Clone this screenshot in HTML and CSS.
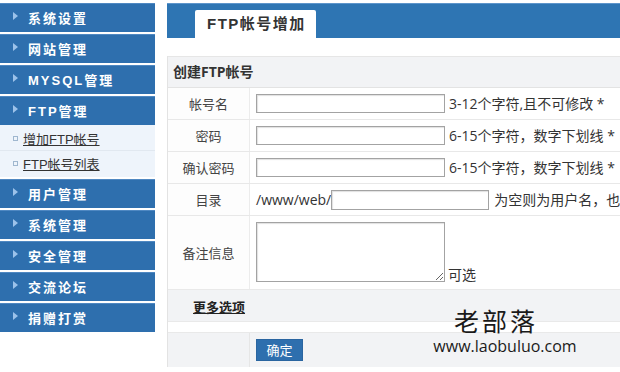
FILE: index.html
```html
<!DOCTYPE html>
<html lang="zh-CN">
<head>
<meta charset="utf-8">
<title>FTP帐号增加</title>
<link rel="stylesheet" href="styles.css">
</head>
<body>
<div class="page">
  <aside class="sidebar">
    <div class="menu-item"><span class="arrow"></span>系统设置</div>
    <div class="menu-item"><span class="arrow"></span>网站管理</div>
    <div class="menu-item"><span class="arrow"></span>MYSQL管理</div>
    <div class="menu-item flush"><span class="arrow"></span>FTP管理</div>
    <div class="submenu">
      <div class="sub-item first"><span class="bullet"></span><a href="#">增加FTP帐号</a></div>
      <div class="sub-item"><span class="bullet"></span><a href="#">FTP帐号列表</a></div>
    </div>
    <div class="menu-item"><span class="arrow"></span>用户管理</div>
    <div class="menu-item"><span class="arrow"></span>系统管理</div>
    <div class="menu-item"><span class="arrow"></span>安全管理</div>
    <div class="menu-item"><span class="arrow"></span>交流论坛</div>
    <div class="menu-item"><span class="arrow"></span>捐赠打赏</div>
  </aside>
  <main class="main">
    <div class="tabbar"><div class="tab">FTP帐号增加</div></div>
    <div class="panel">
      <div class="panel-head">创建FTP帐号</div>
      <div class="row">
        <div class="label">帐号名</div>
        <div class="value"><input class="field" type="text"><span class="hint">3-12个字符,且不可修改 *</span></div>
      </div>
      <div class="row">
        <div class="label">密码</div>
        <div class="value"><input class="field" type="text"><span class="hint">6-15个字符，数字下划线 *</span></div>
      </div>
      <div class="row">
        <div class="label">确认密码</div>
        <div class="value"><input class="field" type="text"><span class="hint">6-15个字符，数字下划线 *</span></div>
      </div>
      <div class="row">
        <div class="label">目录</div>
        <div class="value"><span class="path">/www/web/</span><input class="field dir" type="text"><span class="hint wide">为空则为用户名，也</span></div>
      </div>
      <div class="row tall">
        <div class="label">备注信息</div>
        <div class="value bottom"><textarea class="area"></textarea><span class="hint">可选</span></div>
      </div>
      <div class="row more"><a href="#" class="more-link">更多选项</a></div>
      <div class="spacer"></div>
      <div class="row submit">
        <div class="label"></div>
        <div class="value"><button class="btn" type="button">确定</button></div>
      </div>
    </div>
    <div class="watermark">
      <div class="wm-title">老部落</div>
      <div class="wm-url">www.laobuluo.com</div>
    </div>
  </main>
</div>
</body>
</html>
```

FILE: styles.css
```css
* { box-sizing: border-box; }
html, body { margin: 0; padding: 0; background: #fff; }
body {
  font-family: "Open Sans", "Noto Sans CJK SC", sans-serif;
  color: #333;
  width: 620px;
  height: 372px;
  overflow: hidden;
}
.page { display: flex; align-items: flex-start; }

.sidebar { width: 155px; flex: none; padding-top: 3px; }
.menu-item {
  height: 29px;
  margin-bottom: 2px;
  background: #2e6fae;
  border-top: 1px solid #4f88c2;
  color: #fff;
  font-family: "Liberation Sans", "Noto Sans CJK SC", sans-serif;
  font-weight: bold;
  font-size: 13px;
  letter-spacing: 2px;
  line-height: 27px;
  display: flex;
  align-items: center;
}
.menu-item.flush { margin-bottom: 0; }
.arrow {
  width: 0; height: 0;
  border-top: 4px solid transparent;
  border-bottom: 4px solid transparent;
  border-left: 5px solid #9cc2ea;
  margin: 0 10px 0 13px;
  position: relative;
  top: -2px;
}
.submenu {
  background: #eef4fb;
  margin-bottom: 2px;
  padding-top: 1px;
  height: 52px;
}
.sub-item {
  height: 25px;
  display: flex;
  align-items: center;
  font-family: "Liberation Sans", "Noto Sans CJK SC", sans-serif;
  font-size: 13px;
}
.sub-item.first { border-bottom: 1px solid #e1e8f0; }
.sub-item a { color: #333; text-decoration: underline; }
.bullet {
  width: 5px; height: 5px;
  border: 1px solid #9fb7cf;
  margin: 0 5px 0 13px;
}

.main { flex: 1; margin-left: 12px; position: relative; height: 372px; overflow: hidden; }
.tabbar {
  margin-top: 3px;
  height: 35px;
  background: #2e75b3;
  border-top: 1px solid #5d95cb;
  display: flex;
  align-items: flex-end;
  padding-left: 28px;
}
.tab {
  width: 121px;
  height: 28px;
  background: #fff;
  border-radius: 2px 2px 0 0;
  font-family: "Liberation Sans", "Noto Sans CJK SC", sans-serif;
  font-weight: bold;
  font-size: 15px;
  letter-spacing: 1.5px;
  color: #333;
  line-height: 28px;
  padding-left: 12px;
}

.panel {
  margin-top: 18px;
  border-left: 1px solid #e3e3e3;
  width: 470px;
}
.panel-head {
  height: 32px;
  background: #f2f3f5;
  border-top: 1px solid #e6e6e6;
  border-bottom: 1px solid #e3e3e3;
  font-weight: bold;
  font-size: 14px;
  line-height: 30px;
  padding-left: 5px;
  color: #333;
}
.row {
  display: grid;
  grid-template-columns: 82px 1fr;
  height: 32px;
  border-bottom: 1px solid #e8e8e8;
}
.label {
  border-right: 1px solid #ececec;
  background: #fdfdfd;
  display: flex;
  align-items: center;
  justify-content: center;
  font-size: 13px;
  color: #444;
}
.value {
  display: flex;
  align-items: center;
  padding-left: 6px;
  white-space: nowrap;
  font-size: 14px;
  color: #333;
}
.value.bottom { align-items: flex-end; padding-bottom: 4px; }
.field {
  width: 189px;
  height: 19px;
  border: 1px solid #a3a3a3;
  box-shadow: inset 1px 1px 1px #e0e0e0;
  margin: 0;
  padding: 0;
}
.field.dir { width: 158px; height: 20px; }
.hint { margin-left: 4px; line-height: 18px; }
.hint.wide { margin-left: 5px; }
.path { font-size: 14px; }
.row.tall { height: 74px; }
.area {
  width: 189px;
  height: 60px;
  border: 1px solid #a3a3a3;
  box-shadow: inset 1px 1px 1px #e0e0e0;
  margin: 0 0 3px 0;
  padding: 0;
  resize: both;
}
.value.bottom .hint { margin-left: 3px; line-height: 20px; font-size: 14px; }
.row.more {
  display: flex;
  align-items: center;
  height: 33px;
  background: #f2f3f5;
  border-top: 1px solid #e9e9e9;
  border-bottom: 1px solid #e9e9e9;
  margin-top: -1px;
  padding-left: 25px;
  padding-top: 2px;
}
.more-link {
  color: #222;
  font-weight: bold;
  font-size: 13px;
  text-decoration: underline;
}
.spacer { height: 11px; border-bottom: 1px solid #e9e9e9; }
.row.submit { height: 34px; background: #f2f3f5; border-bottom: 0; }
.row.submit .label { background: #f2f3f5; border-right-color: #e6e6e6; }
.btn {
  width: 47px;
  height: 22px;
  background: #2e6fae;
  color: #fff;
  border: 1px solid #2a65a0;
  font-family: "Noto Sans CJK SC", sans-serif;
  font-size: 13px;
  padding: 0;
  line-height: 20px;
}

.watermark {
  position: absolute;
  left: 266px;
  top: 307px;
  width: 144px;
  text-align: center;
  color: #1a1a1a;
  pointer-events: none;
}
.wm-title {
  font-family: "Noto Sans CJK SC", sans-serif;
  font-size: 25px;
  letter-spacing: 3px;
  line-height: 26px;
  margin-left: -18px;
}
.wm-url {
  font-family: "Open Sans", sans-serif;
  font-size: 16px;
  line-height: 20px;
  margin-top: 3px;
}
```
